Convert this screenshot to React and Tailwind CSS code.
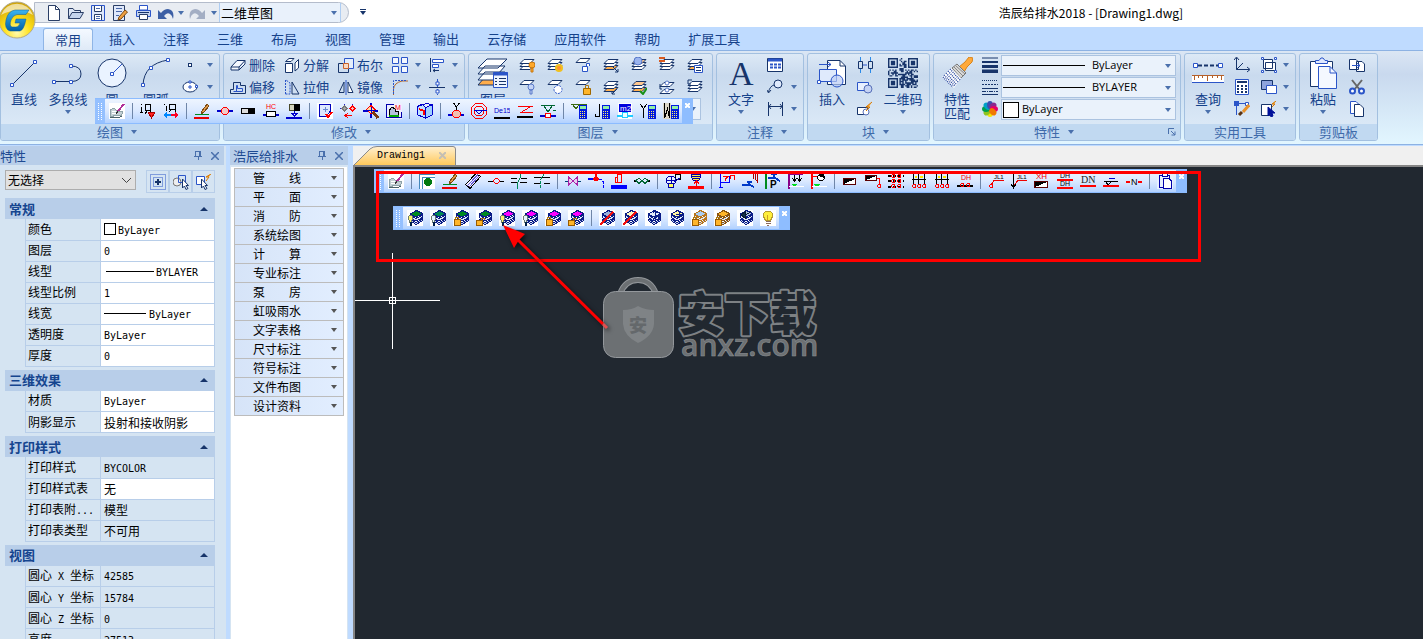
import React from "react";
import clsx from "clsx";

const NAVY = "#17346a";
const BLUE = "#2b55c8";
const ORANGE = "#e8912a";

// every shape is [path, stroke, fill, strokeWidth, dash]; text is { t, x, y, size, fill }
const calc = [
  ["M8 2H16V16H8z", null, "#0018e0"],
  ["M9 3H15V6H9z", null, "#8ff0a8"],
  ["M9 8.5H15M9 10.5H15M9 12.5H15M9 14.5H15", "#fff36a", null, 1, "1 1"],
];
const pencil = [
  ["M8 8L13 1L15 3L10 9L7 11z", "#7b4a12", "#e0994a"],
  ["M1 11.5H15", "#008a20"],
  ["M0 14.5H15", "#e80000", null, 2],
];
const notebook = [
  ["M0 0H16V16H0z", null, "#fff"],
  ["M1 7L5 5L8 8L14 9L12 13L7 12L2 14z", "#8fa3a8", "#c4d0d4"],
  ["M1 14.5H9L13 13.5", "#4a6268"],
  ["M3 8H7M3 10H8", "#fff"],
  ["M15 1L9 8", "#b0309a", null, 2],
  ["M9 8L7 11", "#333"],
];
const halfBox = [
  ["M1.5 5.5H13.5V11.5H1.5z", "#5c0000", "#fff"],
  ["M2 6H13L2 11z", null, "#000"],
];
const ring = (x, y) => [`M${x} ${y + 1}V${y + 3}M${x + 3} ${y + 1}V${y + 3}M${x + 0} ${y + 0.5}H${x + 3}M${x} ${y + 3.5}H${x + 3}`, "#f00", "#fff"];
const hydrants = [
  ["M1 6.5H15M2.5 1V12M7.5 1V12M13.5 1V12", "#000"],
  ["M4 4H6M9 4H12", "#ffe600", null, 2],
  ring(1.5, 11),
  ring(6.5, 11),
  ring(11.5, 11),
];

const toolShapes = {
  notebook,
  pencil,
  riserValve: [
    ["M1.5 1V2M1.5 4V9M0 9.5H3M5.5 1.5H10.5V7.5H5.5zM7.5 7.5L5 11M10.5 7V11", "#000"],
    ["M8 9H15L11.5 15z", "#a00", "#f22"],
  ],
  riserSpan: [
    ["M1.5 1V2M3.5 3V8M6.5 1.5H12.5V6.5H6.5zM8.5 6.5L6 9M12.5 6V9", "#000"],
    ["M0 12L4 9V11H8V13H4V15z", null, "#08f"],
    ["M16 12L12 9V11H8V13H12V15z", null, "#f02"],
  ],
  inlineNode: [
    ["M0 8H5M11 8H16", "#00c", null, 2],
    ["M4.5 6.5L6.5 4.5H9.5L11.5 6.5V9.5L9.5 11.5H6.5L4.5 9.5z", "#f00", "#f3c9c9"],
  ],
  blackBox: [
    ["M1.5 5.5H14.5V10.5H1.5z", "#000", "#dcdcdc"],
    ["M8 5H15V11H8z", null, "#000"],
  ],
  hc: [
    { t: "HC", x: 3, y: 6, size: 7, fill: "#f00" },
    ["M3.5 8.5H12.5V13.5H3.5z", "#000", "#fff"],
    ["M0 11.5H3M13 11.5H16", "#00c", null, 2],
  ],
  boxDrop: [
    ["M3.5 1.5H13.5V7.5H3.5z", "#4a4a2a", "#d5d5c0"],
    ["M8 1H14V8H8z", null, "#000"],
    ["M8.5 8V11", "#00c"],
    ["M0 14.5H16", "#00c", null, 2],
    ["M6 10.5H11L8.5 13z", "#00c", "#fff"],
  ],
  docCheck: [
    ["M0 0H16V16H0z", null, "#fff"],
    ["M2 1.5H13.5V8L9 13.5H2.5V1.5", "#00b", "#dce8ff"],
    ["M8 4V9M5.5 6.5H10.5", "#6a8ad0"],
    ["M9 11L11 14L15 9", "#f00", null, 2],
  ],
  nodeSplit: [
    ["M0 5.5H16M4.5 1V9M12.5 1V9", "#22c", null, 1, "2 1"],
    ["M2 5.5L4.5 3L7 5.5L4.5 8z", "#777", "#aaa"],
    ["M10 5.5L12.5 3L15 5.5L12.5 8z", "#f00", "#fbb"],
    ["M12 12.5H5M8 10L5 12.5L8 15", "#f00"],
  ],
  crossTarget: [
    ["M8 0V15M0 8H15", "#00c", null, 2],
    ["M3.5 6.5L8 2.5L12 6.5L8 11z", "#f00", "#ffd9a0"],
    ["M8 4V10M4 7H12", "#00c"],
    ["M10 9L15 15", "#7a3a10", null, 3],
  ],
  mBlock: [
    ["M0 0H16V16H0z", null, "#eef"],
    ["M8 1.5H.5V14.5H15.5V9", "#00a"],
    ["M3 12V8L6 4L9 6V8H12V12z", "#000", "#b4c2dc"],
    ["M3 13L13 13", "#0a0", null, 2],
    { t: "M", x: 9, y: 7, size: 7, fill: "#f00" },
  ],
  solidBox: [
    ["M0.5 3.5L5 1L8.5 4.5V15L1 12z", "#00c", "#bfe0ff"],
    ["M8.5 4.5L15 2V12L8.5 15z", "#00c", "#9fd0ff"],
    ["M0.5 3.5L10 0.5L15 2", "#00c"],
    ["M2 6L7 8V12", "#f00", null, 2],
  ],
  yValve: [
    ["M5.5 0L8.5 4L11.5 0M8.5 4V7", "#000"],
    ["M0 12H16", "#00c", null, 2],
    ["M4.5 9.5L6.5 7.5H10.5L12.5 9.5V12.5L10.5 14.5H6.5L4.5 12.5z", "#f00", "#f3c0b0"],
  ],
  octagon: [
    ["M4.5 .5H11.5L15.5 4.5V11.5L11.5 15.5H4.5L.5 11.5V4.5z", "#f00"],
    ["M5.5 3.5H10.5L12.5 5.5V10.5L10.5 12.5H5.5L3.5 10.5V5.5z", "#f00"],
    ["M3 7.5H16M5 8L8 11L11 8", "#00c"],
  ],
  de15: [
    { t: "De15", x: 0, y: 10, size: 7, fill: "#00c" },
    ["M0 14.5H16", "#000", null, 2],
  ],
  slope: [
    ["M1 3.5H16M3 9.5H16M3 10L13 4", "#f00"],
    ["M0 14H16", "#000", null, 2],
  ],
  greenValve: [
    ["M1 2.5H15M4 3L8 9L12 3M13 7H16", "#063"],
    ["M0 12.5H16", "#00c", null, 2],
    ["M5.5 10.5H10.5V14.5H5.5z", "#f00", "#fff"],
  ],
  calcTri: [["M0 1.5H16M2 2L5 6L8 2", "#3a6a10"], ...calc],
  calcJ: [["M5.5 1V13.5H1.5V11", "#000"], ...calc],
  calcM2: [
    ["M1 0H15V16H1z", null, "#fff"],
    ["M2 1H13L14 2V9H2z", null, "#00d"],
    { t: "m2", x: 3, y: 8, size: 8, fill: "#fff" },
    ["M0 12.5H16", "#2cf", null, 2],
    ["M5 12a3 3 0 1 0 6 0a3 3 0 1 0-6 0", "#2cf", "#eff"],
  ],
  calcY: [["M0.5 1L3.5 6L6.5 1M3.5 6V15", "#000"], ...calc],
  calcW: [["M0 0H8V16H0z", null, "#ddd8c8"], ["M1.5 0V15L4.5 6L6.5 15V0", "#000"], ...calc],

  pipeDot: [
    ["M0 0H16V16H0z", null, "#fff"],
    ["M0.5 16V1.5H16M3.5 16V4.5H16", "#48b"],
    ["M5 9a4 4 0 1 0 8 0a4 4 0 1 0-8 0", null, "#007a10"],
  ],
  pipes: [
    ["M0.5 11.5L11 .5L15.5 3.5L5 15.5z", "#000", "#f4f2ff"],
    ["M2 13L13 1.5M4 14L14 3", "#6a60d8"],
  ],
  redNode: [["M0 8H5M11 8H16", "#000"], ["M5.5 7.5L7.5 5.5H9.5L11.5 7.5V8.5L9.5 10.5H7.5L5.5 8.5z", "#f00"]],
  cross1: [["M0 5.5H6M10 5.5H16M0 9.5H6M9 9.5H16", "#000"], ["M9.5 0V4L6.5 10V16", "#085"]],
  cross2: [["M0 4.5H16M0 10.5H6M10 10.5H16", "#000"], ["M10 1L6 8V15", "#085", null, 1, "3 1"]],
  bowtie: [["M0 8H3M13 8H16", "#047"], ["M3.5 4V12L12.5 4V12z", "#a2a", "#e6d0f2"]],
  redTee: [
    ["M0 6H10", "#00f", null, 2],
    ["M10 6.5H13L15.5 9V15", "#00f", null, 1, "4 1"],
    ["M8 0V6", "#f00", null, 2],
    ["M6 4H10V5H11V7H10V8H6V7H5V5H6z", null, "#f00"],
  ],
  steps: [["M4 9.5H6.5V1.5H10.5V9.5H7M4.5 9V4.5H7", "#f00"], ["M0 14H16", "#00f", null, 4]],
  greenChain: [["M0 7.5H3M13 7.5H16", "#000", null, 2], ["M2 7.5L5 5L11 10.5L14 7.5L11 5L5 10.5z", "#063"]],
  pump: [
    ["M10.5 1.5H15.5V6.5H10.5z", "#000"],
    ["M1.5 5.5L3.5 3.5H8.5L10.5 5.5V9.5L8.5 11.5H3.5L1.5 9.5z", "#00a", "#e8f0ff"],
    ["M1 7.5H11M6 3V11M9 9L15 5", "#00a"],
    ["M3.5 10.5H8.5V14.5H3.5z", "#00a", "#ffff60"],
  ],
  yellowPump: [
    ["M3.5 1.5H12.5V4.5L10.5 7.5H5.5L3.5 4.5z", "#00a", "#ffe94a"],
    ["M3 3.5H13M5 5.5H11", "#00a"],
    ["M8.5 8V13M6 10.5L8.5 8L11 10.5", "#f00"],
    ["M0 14.5H16", "#f00", null, 3],
  ],
  funnel: [
    ["M1.5 1V15M1 9.5H10.5V3M0 14.5H4", "#00f"],
    ["M4 3.5H9L6.5 6V8M11.5 6V2.5H15.5V7", "#f00"],
  ],
  tap: [
    ["M0 12H8L12 14M5 9H10M7 8V12", "#0039c8", null, 2],
    ["M11.5 0V6M13.5 0V6L15.5 9V0", "#a00"],
  ],
  pTap: [
    ["M1 0V16", "#008a20", null, 2],
    ["M3 5H10L15 8M6 1H12M9 1V5", "#0039c8", null, 2],
    { t: "P", x: 5, y: 15, size: 10, fill: "#000", b: true },
  ],
  sprinkler: [
    ["M1 0V16M0 1H15", "#808", null, 2],
    ["M6.5 2V8M11.5 2V8M4 5L6.5 8L9 5M9 5L11.5 8L14 5", "#000"],
    ["M3 11H9L6 14z", null, "#0d2"],
    ["M1 13.5H16", "#fff"],
  ],
  redBar: [
    ["M1 0V16", "#f00", null, 2],
    ["M1 3H6", "#f00"],
    ["M6.5 3.5L8.5 1.5H11.5L13.5 3.5V5.5L11.5 7.5H8.5L6.5 5.5z", "#000", "#fff"],
    ["M7 3L9 1H13V5z", null, "#000"],
    ["M2 11H9L6 14z", null, "#0d2"],
    ["M1 13.5H16", "#fff"],
  ],
  halfBox,
  halfBoxRed: [
    ["M0.5 2.5H11.5V7.5H0.5z", "#5c0000", "#fff"],
    ["M1 3H11L1 7z", null, "#000"],
    ["M12 5.5H14.5V11", "#f00"],
    ring(12.5, 11),
  ],
  ladder: [
    ["M0 2.5H16M0 8H16M0 13.5H16", "#000", null, 2, "3 2"],
    ring(3.5, 1),
    ring(9.5, 1),
    ring(3.5, 6),
    ring(9.5, 6),
    ring(3.5, 11),
    ring(9.5, 11),
  ],
  hydrants,
  dhNode: [
    { t: "DH", x: 4, y: 7, size: 7, fill: "#e00" },
    ["M0 12.5H16", "#000", null, 2],
    ring(3.5, 10),
    ring(9.5, 10),
  ],
  jl1: [
    { t: "JL1", x: 6, y: 6, size: 6, fill: "#000" },
    ["M6 7.5H16M6 7.5L3 12", "#e00"],
    ring(1.5, 11),
  ],
  jl1Down: [
    { t: "JL1", x: 6, y: 6, size: 6, fill: "#000" },
    ["M7 7.5H16M7 7.5L3 12", "#e00"],
    ["M2.5 0V14M0 11L2.5 15L5 11", "#000"],
  ],
  xh: [
    { t: "XH", x: 2, y: 6, size: 8, fill: "#e00" },
    ["M0.5 8.5H13.5V14.5H0.5z", "#5c0000", "#fff"],
    ["M1 9H13L1 14z", null, "#000"],
  ],
  dhdh: [
    { t: "DH", x: 3, y: 5, size: 7, fill: "#000" },
    ["M0 7H16M0 15H16", "#f00", null, 2],
    { t: "DH", x: 3, y: 13, size: 7, fill: "#000" },
  ],
  dn: [{ t: "DN", x: 1, y: 10, size: 10, fill: "#222", serif: true }, ["M0 13H16", "#f00", null, 2]],
  level: [
    ["M1 8.5H15M3 9L5 12L8 9", "#000"],
    ["M6 5.5H12", "#00c"],
    ["M0 13H16", "#f00", null, 2],
  ],
  nLine: [{ t: "N", x: 5, y: 12, size: 9, fill: "#000" }, ["M0 8.5H4M12 8.5H16", "#f00", null, 2]],
  clipboard: [
    ["M0 0H16V16H0z", null, "#e6f0ff"],
    ["M2.5 2.5H12.5V14.5H2.5z", "#00a"],
    ["M5 0.5H10V3.5H5z", "#00a", "#fff"],
    ["M6.5 5.5H12L14.5 8V15.5H6.5z", "#00a", "#fff"],
  ],
  bulb: [
    ["M0 0H16V16H0z", null, "#fff"],
    ["M5.5 10.5L3.5 6.5V3.5L5.5 1.5H10.5L12.5 3.5V6.5L10.5 10.5z", "#b59a30", "#ffee3a"],
    ["M7.5 5V10", "#d0a020"],
    ["M6 11.5H11M6 13.5H11M7 15.5H9", "#8a6a5a"],
  ],
};

const stack = (top, edge = "#0a1c86") => [
  ["M0 0H16V16H0z", null, "#fff"],
  ["M3 10.5L9 14.5L15.5 10.5V9L9 12.500L3 9z", edge, "#c9d6ee"],
  ["M3 7.5L9 11L15.5 7.5V5L9 8.5L3 5z", edge, "#dfe8f6"],
  ["M3 4L9.5 .5L15.5 3.5L9.500 7z", edge, top],
];
const bulbMark = (fill) => [
  ["M1.5 6.5L2.5 5.5H4.5L5.5 6.5V9.5L4.5 10.5V12H2.5V10.5L1.5 9.5z", "#6c7c70", fill],
  ["M4 12V16", "#00204a", null, 2],
];
const lockMark = [
  ["M2.5 10V7.5H5.5V10", "#b07a10"],
  ["M1.5 9.5H7.5V15.5H1.5z", "#9a5c00", "#ffb52a"],
];
const unlockMark = [
  ["M5.5 11V8.5H8.5V10", "#b07a10"],
  ["M0.5 10.5H6.5V15.5H0.5z", "#9a5c00", "#ffb52a"],
];
const slash = [["M1 15L14 2", "#f01010", null, 2]];
const star = [["M5 6H15M10 1V11M8 3L10 1L12 3M13 4L15 6L13 8M8 9L10 11L12 9", "#0a1c86"]];

Object.assign(toolShapes, {
  layerOn: [...stack("#008a20"), ...bulbMark("#fff36a")],
  layerOff: [...stack("#008a50"), ...bulbMark("#e4f4ff")],
  layerLock: [...stack("#008a20"), ...lockMark],
  layerUnlock: [...stack("#008a20"), ...unlockMark],
  entOn: [...stack("#ff00ff"), ...bulbMark("#fff36a")],
  entOff: [...stack("#ff00ff"), ...bulbMark("#e4f4ff")],
  entLock: [...stack("#ff00ff"), ...lockMark],
  entUnlock: [...stack("#ff00ff"), ...unlockMark],
  layerDelete: [...stack("#9ab0da"), ...slash],
  entDelete: [...stack("#fff6c0"), ...slash],
  layerMove: [...stack("#e4ecfa"), ...star],
  entMove: [...stack("#fff6a0"), ["M8 4.500H15M11.500 1V8", "#0a1c86"]],
  layerLockAll: [...stack("#a9cdf2", "#b8741a"), ...lockMark],
  layerLockOther: [...stack("#ffb52a", "#8a5410"), ...lockMark],
  layerBack: [...stack("#a9bddc"), ["M4 5L8 8L8 2zM8 5Q12 4 14 1", "#0a1c30", "#16324a"]],
});

// ribbon icons
const sheet = (y, fill = "#fff") => [`M5 ${y}H15L11 ${y + 4}H1z`, NAVY, fill];
const sheets3 = (bottom = "#fff", top = "#fff") => [sheet(8.5, bottom), sheet(5.5), sheet(2.5, top)];
const ribbonShapes = {
  newFile: [["M2.5 .5H9.5L13.5 4.5V15.5H2.5z", "#2a3e66", "#fff"], ["M9.5 .5V4.5H13.5", "#2a3e66"]],
  open: [["M.5 13.5V3.5H5L6.5 5.5H12.5V7.5", "#2a3e66", "#dde6f5"], ["M.5 13.5L4 7.5H15.5L12 13.5z", "#2a3e66", "#c5d4ec"]],
  save: [["M1.5 .5H14.5V15.5H1.5z", BLUE, "#dfe8fa"], ["M4.5 1V6.5H11.5V1M4.5 15V9.5H11.5V15", "#2a3e66", "#fff"], ["M6 11.5H10M6 13.5H10M6 3.5H10", "#4a68a8"]],
  saveAs: [["M1.5 .5H12.5V15.5H1.5z", "#2a3e66", "#dfe8fa"], ["M4 3.5H10M4 6.5H10M4 10.5H7", "#4a68a8"], ["M7 12L13 5L15.5 7L9 14L6 15z", "#7b4a12", "#f0a040"]],
  print: [["M4.5 .5H12.5V5H4.5z", BLUE, "#fff"], ["M1.5 5.5H15.5V11.5H1.5z", BLUE, "#c5d4f0"], ["M4.5 9.5H12.5V14.5H4.5z", "#2a3e66", "#fff"], ["M3 7.5H14", NAVY]],
  undo: [["M0 5V14H9L6 11Q9 7 12 9Q14 10 15 14Q17 5 10 4Q6 4 3 8z", null, "#3c5fa5"]],
  redo: [["M16 5V14H7L10 11Q7 7 4 9Q2 10 1 14Q-1 5 6 4Q10 4 13 8z", null, "#a3aec4"]],
  erase: [["M1 10L7 3.5H15L9 10zM1 10V13H9V10M9 13L15 7V3.5", NAVY, "#f4f8ff"]],
  explode: [["M1.5 6.5H8.5V15.5H1.5z", NAVY, "#fff"], ["M1.5 4.5L5 1.5H10L7 4.5zM11 6L14.5 2.5V11L11 14z", NAVY, "#fff"]],
  boolean: [["M6.5 1.5H15.5V11.5H6.5z", BLUE, "#e4eefb"], ["M5.5 6.5H.5V15.5H10.5V12", NAVY], ["M5.5 6.5H10.5V11.5H5.5z", "#c8622a", "#fbd9c0"]],
  offset: [["M.5 14.5V10.5H3.5V3.5H10.5V6.5H15.5V14.5z", NAVY], ["M3.5 12.5H12.5V9.5H7.5V6.5H6.5V12", BLUE]],
  stretch: [["M1.5 1V15M1.5 15H6V4L2 1", BLUE, null, 1, "2 1"], ["M8 3L15 15H8z", NAVY]],
  mirror: [["M6 3V13.5H1z", NAVY], ["M10 3V13.5H15z", NAVY, "#fff"], ["M8 1V16", BLUE]],
  array: [["M.5 .5H6.5V6.5H.5zM9.5 9.5H15.5V15.5H9.5zM9.5 .5H15.5V6.5H9.5zM.5 9.5H6.5V15.5H.5z", BLUE, "#f4f8ff"]],
  align: [["M1.5 1V15", NAVY], ["M3.5 2.5H14.5V5.5H3.5zM3.5 7.5H9.5V10.5H3.5z", BLUE, "#fff"], ["M4 13.5H10M4 13.5L6 12M4 13.5L6 15", NAVY]],
  fillet: [["M1.5 16V10Q2 4 10 2H16", "#b56a30"], ["M1.5 15V1.5H15", BLUE, null, 1, "2 1"]],
  breakLine: [["M0 8.5H16", NAVY], ["M8.5 0V16", BLUE, null, 1, "3 2"], ["M7 3h3v3h-3zM7 11h3v3h-3z", BLUE, "#fff"]],
  lyOn: [...sheets3(), ["M10 8a3 3 0 1 0 6 0a3 3 0 1 0-6 0M12 11h2v4h-2z", "#c87810", "#ffa82a"]],
  lySun: [...sheets3(), ["M9 11a3 3 0 1 0 6 0a3 3 0 1 0-6 0", "#f0c020", "#ff9030", 2]],
  lyUnlock: [sheet(1.5), ["M7.5 9.5H12.5V14.5H7.5zM11.5 9V6.5H14.5V9", BLUE, "#fff"]],
  lyMatch: [...sheets3("#ffb050"), ["M10 10L15 15M15 12V15H12", NAVY]],
  lyGlobe: [...sheets3("#fff", "#ffc890"), ["M3 4a4 4 0 1 0 8 0a4 4 0 1 0-8 0", "#5878c8", "#9ab4ee"]],
  lyRed: [...sheets3(), ["M0 1H6M0 4H6", "#d85a20", null, 2]],
  lyList: [...sheets3("#ffb050"), ["M7.5 8.5H15.5V15.5H7.5z", BLUE, "#fff"], ["M9 10.5H14M9 13.5H14", NAVY]],
  lyOff: [sheet(1.5), ["M9 8a3 3 0 1 0 6 0a3 3 0 1 0-6 0M11 11h2v4h-2z", "#5878c8", "#c4d4f6"]],
  lyFreeze: [sheet(1.5), ["M7 10.5a4 4 0 1 0 8 0a4 4 0 1 0-8 0", BLUE, "#fff", 1, "2 1"]],
  lyLock: [sheet(1.5), ["M10.5 9V6.5H13.5V9", "#b07a10"], ["M8.5 9.5H15.5V15.5H8.5z", "#a06800", "#ffb52a"]],
  lyDown: [...sheets3("#ffb050"), ["M14 10L9 15M9 12V15H12", NAVY]],
  lyCheck: [...sheets3("#ffb050", "#ffc890"), ["M9 12L12 15L16 9", "#189018", null, 2]],
  lyWalk: [sheet(10.5), sheet(3.5), ["M6 4a2 2 0 1 0 4 0a2 2 0 1 0-4 0M6 11a2 2 0 1 0 4 0a2 2 0 1 0-4 0", "#5878c8", "#fff"], ["M1 5V10H3", NAVY]],
  lyPrev: [...sheets3(), ["M1 1V5H4M1 1H5", NAVY]],
  table: [["M.5 1.5H15.5V14.5H.5z", NAVY, "#fff"], ["M1 3H15", BLUE, null, 3], ["M3 7.5H6M7 7.5H10M11 7.5H14M3 10.5H6M7 10.5H10M11 10.5H14", BLUE, null, 2]],
  leader: [["M7 5a4 4 0 1 0 8 0a4 4 0 1 0-8 0", NAVY, "#dfeafc"], ["M7 6Q3 7 1.5 13M0 11L1.5 14L4 11", NAVY]],
  dim: [["M1.5 1V15M15.5 1V15M2 5.5H15M4 3L2 5.5L4 8M13 3L15 5.5L13 8", NAVY]],
  blockLink: [["M1.5 4.5H5.5V11.5H1.5zM11.5 4.5H15.5V11.5H11.5z", NAVY], ["M3.5 0V4M3.5 12V16M13.5 0V4M13.5 12V16", "#2a8ae8"], ["M6 8H10", BLUE]],
  blockMake: [["M.5 3.5H11.5V11.5H.5z", BLUE, "#e8f0ff"], ["M7 10a4 4 0 1 0 8 0a4 4 0 1 0-8 0", "#5870b8", "#c4d2f4"]],
  blockEdit: [["M.5 6.5H10.5V13.5H.5z", NAVY, "#fff"], ["M6 11a3 3 0 1 0 6 0a3 3 0 1 0-6 0", "#5870b8", "#fff"], ["M15 1L9 6H13L9 10", "#d87800", "#ffa82a"]],
  weight: [["M0 1H16", NAVY], ["M0 5H16", NAVY, null, 2], ["M0 9.5H16", NAVY, null, 3], ["M0 14.5H16", NAVY, null, 4]],
  ltype: [["M0 1.5H16", NAVY, null, 1, "1 1"], ["M0 5.5H16", NAVY, null, 1, "2 1"], ["M0 9.5H16M0 15.5H16", NAVY], ["M0 12.5H16", NAVY, null, 1, "4 1 1 1"]],
  ucs: [["M2.5 1V12.5H15M2.5 12.5L9 6M0 3L2.5 0L5 3M13 10L16 12.5L13 15", NAVY]],
  calculator: [["M1.5 .5H14.5V15.5H1.5z", BLUE, "#fff"], ["M3 3H13", NAVY, null, 2], ["M3 7H13M3 10H13M3 13H13", NAVY, null, 2, "2 2"]],
  paintLine: [["M2.5 14V2.5H13", BLUE], ["M0 0H5V5H0z", null, BLUE], ["M11.5 1.5H14.5V4.5H11.5z", BLUE, "#fff"], ["M15 4L9 11", ORANGE, null, 3], ["M8 11L5 14", "#5a3210", null, 3]],
  group: [["M2.5 2.5H11.5V11.5H2.5zM4.5 5.5H14.5V13.5H4.5z", NAVY, "#fff"], ["M.5 .5H2.5V2.5H.5zM13.5 .5H15.5V2.5H13.5zM.5 13.5H2.5V15.5H.5zM13.5 13.5H15.5V15.5H13.5z", BLUE, "#fff"]],
  overlap: [["M.5 1.5H11.5V10.5H.5z", NAVY, "#8ea4dc"], ["M5.5 6.5H15.5V14.5H5.5z", BLUE, "#fff"]],
  quickSel: [["M.5 3.5H10.5V14.5H.5z", NAVY, "#fff"], ["M7 6L14 12H11L12 15L10 16L9 13L7 15z", "#00109a", "#00109a"], ["M15 0L11 3H14L11 6", "#d87800", "#ffa82a"]],
  copyLink: [["M.5 2.5H7L9.5 5V12.5H.5zM7.5 4.5H13L15.5 7V14.5H7.5z", NAVY, "#fff"], ["M3 8.5H11M8 6L11 8.5L8 11", BLUE]],
  cut: [["M3 1L11 11M13 1L5 11", "#666", null, 2], ["M1 12a2 2 0 1 0 5 0a2 2 0 1 0-5 0M10 12a2 2 0 1 0 5 0a2 2 0 1 0-5 0", BLUE, "#fff", 2]],
  copy: [["M1.5 .5H7L10.5 4V12.5H1.5z", BLUE, "#fff"], ["M5.5 3.5H11L14.5 7V15.5H5.5z", NAVY, "#fff"]],
  pickAdd: [["M.5 .5H15.5V15.5H.5zM3.5 3.5H12.5V12.5H3.5z", BLUE, null, 1, "1 1"], ["M8 5V11M5 8H11", NAVY, null, 2]],
  pickObj: [["M0 8a4 4 0 1 0 8 0a4 4 0 1 0-8 0", "#777", "#eee"], ["M5.5 1.5H12.5V8.5H5.5z", BLUE], ["M9.5 5V14L11.5 12L13 15.5L15 14.5L13 11.5H15.5z", NAVY, "#fff"]],
  pickFast: [["M.5 2.5H8.5V10.5H.5z", BLUE, "#fff"], ["M5.5 5V14L7.5 12L9 15.5L11 14.5L9 11.5H11.5z", NAVY, "#fff"], ["M15 0L10 3H13L10 7", "#d87800", "#ffa82a"]],
};

const Shapes = ({ list }) =>
  list.map((s, i) =>
    Array.isArray(s) ? (
      <path
        key={i}
        d={s[0]}
        stroke={s[1] || "none"}
        fill={s[2] || "none"}
        strokeWidth={s[3] || 1}
        strokeDasharray={s[4]}
      />
    ) : (
      <text
        key={i}
        x={s.x}
        y={s.y}
        fontSize={s.size}
        fill={s.fill}
        fontWeight={s.b ? 700 : 400}
        fontFamily={s.serif ? "Liberation Serif, serif" : "Liberation Sans, sans-serif"}
      >
        {s.t}
      </text>
    )
  );

const Icon = ({ list, crisp }) => (
  <svg
    viewBox="0 0 16 16"
    className="h-4 w-4 shrink-0"
    shapeRendering={crisp ? "crispEdges" : "auto"}
    aria-hidden="true"
  >
    <Shapes list={list} />
  </svg>
);

const Caret = ({ className }) => (
  <svg viewBox="0 0 6 4" className={clsx("h-1 w-1.5 shrink-0", className || "text-[#4a70ac]")} aria-hidden="true">
    <path d="M0 0H6L3 4z" fill="currentColor" />
  </svg>
);

const CaretButton = ({ label, className }) => (
  <button aria-label={label} className={clsx("flex items-center justify-center", className || "h-[22px] w-4")}>
    <Caret />
  </button>
);

const IconButton = ({ name, className }) => (
  <button aria-label={name} className={clsx("flex h-[22px] items-center justify-center", className || "w-6")}>
    <Icon list={ribbonShapes[name]} />
  </button>
);

const ToolStrip = ({ groups, className, label }) => (
  <div
    role="toolbar"
    aria-label={label}
    className={clsx("absolute flex border-y border-[#8cbcff] bg-[#94c0ff]", className)}
  >
    <div className="flex w-[10px] items-center justify-center">
      <svg viewBox="0 0 4 17" className="h-[17px] w-1" shapeRendering="crispEdges" aria-hidden="true">
        <path d="M.5 0V17M3.5 0V17" stroke="#fff" strokeDasharray="1 1" />
      </svg>
    </div>
    <div className="flex items-center bg-linear-to-b from-[#eef5ff] via-[#dbe9ff] to-[#b3d2ff]">
      {groups.map((group, g) => (
        <React.Fragment key={g}>
          {g > 0 && (
            <span className="flex w-2 justify-center">
              <span className="h-4 w-px bg-[#6f86a8]" />
            </span>
          )}
          {group.split(" ").map((name, i) => (
            <button key={name + i} aria-label={name} className="flex h-[22px] w-[23px] items-center justify-center">
              <Icon list={toolShapes[name]} crisp />
            </button>
          ))}
        </React.Fragment>
      ))}
    </div>
    <button aria-label="关闭" className="flex w-[11px] justify-center bg-[#8ebdff] pt-1">
      <svg viewBox="0 0 5 5" className="h-[5px] w-[5px]" aria-hidden="true">
        <path d="M0 0L5 5M5 0L0 5" stroke="#fff" strokeWidth="2" />
      </svg>
    </button>
  </div>
);

const drawTools = [
  "notebook",
  "riserValve riserSpan",
  "pencil inlineNode blackBox hc boxDrop",
  "docCheck nodeSplit crossTarget mBlock",
  "solidBox",
  "yValve octagon de15 slope greenValve",
  "calcTri calcJ calcM2 calcY calcW",
];
const pipeTools = [
  "notebook",
  "pipeDot pencil pipes redNode cross1 cross2",
  "bowtie redTee steps greenChain",
  "pump yellowPump",
  "funnel tap pTap sprinkler redBar",
  "halfBox halfBoxRed ladder hydrants hydrants dhNode",
  "jl1 jl1Down xh dhdh dn level nLine",
  "clipboard",
];
const layerTools = [
  "layerOn layerOff layerLock layerUnlock entOn entOff entLock entUnlock",
  "layerDelete entDelete layerMove entMove layerLockAll layerLockOther layerBack bulb",
];

const Panel = ({ title, caret, launcher, className, children }) => (
  <section
    className={clsx(
      "mr-[3px] flex h-[88px] shrink-0 flex-col rounded-[3px] border border-[#a3c0e0] bg-linear-to-b from-[#dde9f6] via-[#c9daee] via-25% to-[#e0edf9]",
      className
    )}
  >
    <div className="flex h-[70px]">{children}</div>
    <h2 className="flex h-4 items-center justify-center gap-2 rounded-b-[2px] bg-[#c1d9f1] text-[13px] leading-4 text-[#3e6aaa]">
      <span className={clsx(caret && "pl-[14px]", launcher && "ml-auto")}>{title}</span>
      {caret && <Caret />}
      {launcher && (
        <button aria-label="特性设置" className="mr-1 ml-auto">
          <svg viewBox="0 0 8 8" className="h-2 w-2">
            <path d="M.5 6V.5H6M3 3L7 7M7 3.5V7H3.5" stroke="#4a70ac" fill="none" />
          </svg>
        </button>
      )}
    </h2>
  </section>
);

const BigButton = ({ label, caret, className, children }) => (
  <button className={clsx("flex shrink-0 flex-col items-center text-[13px] leading-[14px] text-[#15428b]", className || "w-11")}>
    <span className="flex h-[38px] w-full items-center justify-center">{children}</span>
    <span>{label}</span>
    {caret && <Caret className="mt-1 text-[#4a70ac]" />}
  </button>
);

const node = { fill: "#fff", stroke: BLUE, strokeWidth: 1 };
const LineIcon = () => (
  <svg viewBox="0 0 32 32" className="h-8 w-8" fill="none">
    <path d="M4 28L27 5" stroke={NAVY} />
    <path d="M2.5 26.5h3v3h-3zM25.5 3.5h3v3h-3z" {...node} />
  </svg>
);
const PolylineIcon = () => (
  <svg viewBox="0 0 32 32" className="h-8 w-8" fill="none">
    <path d="M2 24.5H20Q29 24 29 17Q29 9 19 9" stroke={NAVY} />
    <path d="M.5 23.5h3v3h-3zM17.5 23.5h3v3h-3zM17.5 7.5h3v3h-3z" {...node} />
  </svg>
);
const CircleIcon = () => (
  <svg viewBox="0 0 32 32" className="h-8 w-8" fill="none">
    <circle cx="16" cy="16" r="14" stroke={NAVY} fill="#eaf3ff" />
    <path d="M16 17L26 7" stroke={BLUE} />
    <path d="M14.5 15.5h3v3h-3z" {...node} />
  </svg>
);
const ArcIcon = () => (
  <svg viewBox="0 0 32 32" className="h-8 w-8" fill="none">
    <path d="M3 28Q4 7 28 3" stroke={NAVY} />
    <path d="M1.5 26.5h3v3h-3zM9.5 9.5h3v3h-3zM26.5 1.5h3v3h-3z" {...node} />
  </svg>
);
const LayersIcon = () => (
  <svg viewBox="0 0 32 32" className="h-8 w-8" fill="none">
    <path d="M8 20H28L21 28H1z" stroke={NAVY} fill="#ffad4a" />
    <path d="M8 15H28L21 23H1zM8 9H28L21 17H1zM10 2H30L21 11H1z" stroke={NAVY} fill="#fff" />
    <path d="M16.5 15.5H30.5V30.5H16.5z" stroke={BLUE} fill="#eef4ff" />
    <path d="M16 17H31" stroke={BLUE} strokeWidth="3" />
    <path d="M18 21.5H20M22 21.5H29M18 24.5H20M22 24.5H29M18 27.5H20M22 27.5H29" stroke={NAVY} />
  </svg>
);
const InsertIcon = () => (
  <svg viewBox="0 0 32 32" className="h-8 w-8" fill="none">
    <path d="M11.5 3.5H24L29.5 9V27.5H11.5z" stroke={NAVY} fill="#fff" />
    <path d="M24 3.5V9H29" stroke={NAVY} />
    <path d="M3.5 12.5H20.5V24.5H3.5z" stroke={BLUE} fill="#dfeafc" />
    <path d="M3 7.5H15M12 5L15 7.5L12 10" stroke={BLUE} />
    <circle cx="21" cy="24" r="6" stroke={BLUE} fill="#b9ccf4" fillOpacity=".7" />
    <path d="M1.5 23.5h3v3h-3z" {...node} />
  </svg>
);
const TextIcon = () => (
  <svg viewBox="0 0 32 32" className="h-8 w-8">
    <text x="4" y="28" fontSize="34" fontFamily="Liberation Serif, serif" fill={NAVY}>A</text>
  </svg>
);
const BrushIcon = () => (
  <svg viewBox="0 0 32 32" className="h-8 w-8" fill="none">
    <path d="M18 10L24 5L28 0L32 1L31 5L26 10L23 15z" fill="#ffa93a" stroke="#d8841a" />
    <path d="M11 11L16 7L25 16L20 21z" fill="#d8d8d8" stroke="#777" />
    <path d="M13 10L22 19M15 9L24 17" stroke="#888" />
    <path d="M10 11L20 21L13 31L1 20z" fill="#fff" />
    <path d="M9 12L19 23M7 14L17 25M5 16L15 27M3 18L14 29M2 20L12 30" stroke="#2848a0" strokeWidth="1.5" strokeDasharray="1 1" />
  </svg>
);
const MeasureIcon = () => (
  <svg viewBox="0 0 32 32" className="h-8 w-8" fill="none">
    <path d="M6 8.5H26" stroke={NAVY} strokeWidth="2" strokeDasharray="4 2" />
    <path d="M1.5 6.5h4v4h-4zM26.5 6.5h4v4h-4z" {...node} />
    <path d="M0 18.5H32V25H0z" fill="#fff" />
    <path d="M0 18.5H32M2.5 19V23M6.5 19V21M10.5 19V21M15.5 19V24M20.5 19V21M25.5 19V21M29.5 19V23" stroke="#b5602a" />
    <path d="M0 25.5H32" stroke={BLUE} />
  </svg>
);
const PasteIcon = () => (
  <svg viewBox="0 0 32 32" className="h-8 w-8" fill="none">
    <path d="M3.5 4.5H25.5V29.5H3.5z" stroke={NAVY} fill="#fff" />
    <path d="M8.5 6.5V3.5H12L14 1H16L18 3.5H20.5V6.5z" stroke={BLUE} fill="#dfe8ff" />
    <path d="M11.5 9.5H23L29.5 16V31.5H11.5z" stroke={BLUE} fill="#f4f8ff" />
    <path d="M23 9.5V16H29.5" stroke={BLUE} />
  </svg>
);

const QR_SIZE = 21;
const isFinder = (x, y) =>
  [[0, 0], [14, 0], [0, 14]].find(([fx, fy]) => x >= fx && x < fx + 7 && y >= fy && y < fy + 7);
const qrCells = [];
for (let y = 0; y < QR_SIZE; y++) {
  for (let x = 0; x < QR_SIZE; x++) {
    const f = isFinder(x, y);
    if (f) {
      const d = Math.max(Math.abs(x - f[0] - 3), Math.abs(y - f[1] - 3));
      if (d !== 2) qrCells.push([x, y]);
    } else if ((x * 7 + y * 13 + x * y * 3 + ((x * x + y) % 5)) % 9 < 5) {
      const quiet = (x === 7 && (y < 8 || y > 12)) || (y === 7 && (x < 8 || x > 12)) || (x === 13 && y < 8) || (y === 13 && x < 8);
      if (!quiet) qrCells.push([x, y]);
    }
  }
}
const QrIcon = () => (
  <svg viewBox="0 0 21 21" className="h-[30px] w-[30px]">
    <path d={qrCells.map(([x, y]) => `M${x} ${y}h1v1h-1z`).join("")} fill={NAVY} />
  </svg>
);

const wheel = ["#f5e400", "#8fc31f", "#009f4c", "#00a0c8", "#3a4fb0", "#8a2a90", "#e5006a", "#f07800"];
const WheelIcon = () => (
  <svg viewBox="0 0 16 16" className="h-4 w-4">
    {wheel.map((c, i) => (
      <ellipse key={c} cx="8" cy="4" rx="3" ry="4" fill={c} transform={`rotate(${180 + i * 45} 8 8)`} />
    ))}
  </svg>
);

const ModifyButton = ({ icon, label }) => (
  <button className="flex h-[22px] w-[54px] items-center gap-[3px] text-[13px] text-[#15428b]">
    <Icon list={ribbonShapes[icon]} />
    <span className="whitespace-nowrap">{label}</span>
  </button>
);

const LineSelect = ({ value, label, swatch }) => (
  <div className="flex h-[21px] items-center border border-[#abc3e0] bg-[#eaf2fb]">
    {swatch ? (
      <span className="ml-px h-4 w-4 shrink-0 border border-black bg-white" />
    ) : (
      <span className="mr-1 ml-px h-px w-[82px] shrink-0 bg-black" />
    )}
    <select aria-label={label} className="min-w-0 flex-1 appearance-none pl-[3px] font-['Open_Sans',sans-serif] text-[11px] text-black">
      <option>{value}</option>
    </select>
    <Caret className="mr-1 text-[#4a70ac]" />
  </div>
);

const Logo = () => (
  <svg viewBox="0 0 38 40" className="absolute top-0 left-0 z-10 h-10 w-[38px]">
    <defs>
      <radialGradient id="gold" cx="50%" cy="85%" r="90%">
        <stop offset="0" stopColor="#fffbb0" />
        <stop offset=".4" stopColor="#ffe11a" />
        <stop offset="1" stopColor="#c99a00" />
      </radialGradient>
      <linearGradient id="g" x1="0" y1="0" x2="0" y2="1">
        <stop offset="0" stopColor="#3cb4f0" />
        <stop offset="1" stopColor="#0060a8" />
      </linearGradient>
    </defs>
    <circle cx="17" cy="20" r="18" fill="url(#gold)" stroke="#b0aa90" />
    <path d="M1 15A17 17 0 0 1 33 15Q17 6 1 15z" fill="#fff" opacity=".6" />
    <path
      d="M29 10H15Q8 11 6 20Q4 29 10 31H20Q24 30 26 19H16L15 23H20Q19 27 16 27H12Q9 26 11 20Q13 15 17 14.5H26z"
      fill="url(#g)"
      stroke="#0a5a98"
      strokeWidth=".5"
    />
  </svg>
);

const tabs = ["插入", "注释", "三维", "布局", "视图", "管理", "输出", "云存储", "应用软件", "帮助", "扩展工具"];

const QuickButton = ({ name, className }) => (
  <button aria-label={name} className={clsx("flex h-full items-center justify-center", className || "w-[22px]")}>
    <Icon list={ribbonShapes[name]} />
  </button>
);

const TitleBar = () => (
  <header className="flex h-[27px] shrink-0 bg-white pt-[2px] pl-[34px]">
    <div className="flex h-[21px] w-[315px] shrink-0 items-center rounded-r-[12px] border border-[#b4bccb] bg-[#e8ecf2] pl-2">
      <QuickButton name="newFile" />
      <QuickButton name="open" />
      <QuickButton name="save" />
      <QuickButton name="saveAs" />
      <QuickButton name="print" className="w-6" />
      <QuickButton name="undo" className="w-[22px]" />
      <CaretButton label="撤销列表" className="h-full w-2" />
      <QuickButton name="redo" className="w-6" />
      <CaretButton label="重做列表" className="h-full w-[10px]" />
      <div className="flex h-full w-[122px] items-center border-x border-[#aecdf2] bg-[#e9f1fb]">
        <select aria-label="工作空间" className="min-w-0 flex-1 appearance-none pl-px text-[13px] leading-[18px] text-black">
          <option>二维草图</option>
        </select>
        <Caret className="mr-[3px] text-[#4a70ac]" />
      </div>
    </div>
    <button aria-label="自定义快速访问" className="ml-[10px] flex h-[20px] w-2 flex-col items-center justify-center gap-px">
      <span className="h-px w-1.5 bg-[#17346a]" />
      <Caret className="text-[#17346a]" />
    </button>
    <h1 className="flex-1 pl-[392px] text-center text-[12px] leading-[22px] text-black">浩辰给排水2018 - [Drawing1.dwg]</h1>
  </header>
);

const Ribbon = () => (
  <div className="relative flex h-[95px] shrink-0 border-t border-b border-[#8db2e3] bg-linear-to-b from-[#dbe6f4] via-[#c9d9ee] via-25% to-[#e2f6ff] pt-[2px]">
    <Panel title="绘图" caret className="w-[220px]">
      <div className="flex pl-px">
        <BigButton label="直线"><LineIcon /></BigButton>
        <BigButton label="多段线" caret><PolylineIcon /></BigButton>
        <BigButton label="圆"><CircleIcon /></BigButton>
        <BigButton label="圆弧"><ArcIcon /></BigButton>
      </div>
      <div className="flex w-6 flex-col">
        <button aria-label="点" className="flex h-[22px] items-center justify-center">
          <span className="h-1 w-1 border border-[#17346a] bg-white" />
        </button>
        <button aria-label="椭圆" className="flex h-[22px] items-center justify-center">
          <svg viewBox="0 0 16 16" className="h-4 w-4" fill="none">
            <ellipse cx="8" cy="8" rx="7" ry="5" stroke={NAVY} fill="#fff" />
            <path d="M8 6V10M6 8H10" stroke={BLUE} />
            <path d="M13.5 6.5h2v2h-2zM7 2h2v2h-2z" stroke={BLUE} fill="#fff" />
          </svg>
        </button>
      </div>
      <div>
        <CaretButton label="点选项" />
        <CaretButton label="椭圆选项" />
      </div>
    </Panel>

    <Panel title="修改" caret className="w-[242px]">
      <div className="grid h-11 grid-cols-[54px_54px_54px_16px_20px_18px_18px] pl-[6px]">
        <ModifyButton icon="erase" label="删除" />
        <ModifyButton icon="explode" label="分解" />
        <ModifyButton icon="boolean" label="布尔" />
        <IconButton name="array" className="w-4" />
        <CaretButton label="阵列选项" className="h-[22px]" />
        <IconButton name="align" className="w-[18px]" />
        <CaretButton label="对齐选项" className="h-[22px]" />
        <ModifyButton icon="offset" label="偏移" />
        <ModifyButton icon="stretch" label="拉伸" />
        <ModifyButton icon="mirror" label="镜像" />
        <IconButton name="fillet" className="w-4" />
        <CaretButton label="圆角选项" className="h-[22px]" />
        <IconButton name="breakLine" className="w-[18px]" />
        <CaretButton label="打断选项" className="h-[22px]" />
      </div>
    </Panel>

    <Panel title="图层" caret className="w-[245px]">
      <BigButton label="图层" className="ml-[2px] w-11"><LayersIcon /></BigButton>
      <div>
        <div className="grid h-11 grid-cols-[repeat(7,28px)]">
          {"lyOn lySun lyUnlock lyMatch lyGlobe lyRed lyList lyOff lyFreeze lyLock lyDown lyCheck lyWalk lyPrev"
            .split(" ")
            .map((n) => (
              <IconButton key={n} name={n} className="w-6" />
            ))}
        </div>
        <div className="flex h-[22px] w-[186px] items-center border border-[#abc3e0] bg-[#eaf2fb]">
          <select aria-label="当前图层" className="min-w-0 flex-1 appearance-none pl-1 text-[12px]">
            <option></option>
          </select>
          <Caret className="mr-1 text-[#4a70ac]" />
        </div>
      </div>
    </Panel>

    <Panel title="注释" caret className="w-[88px]">
      <BigButton label="文字" caret className="ml-px w-[46px]"><TextIcon /></BigButton>
      <div>
        <IconButton name="table" className="w-[22px]" />
        <IconButton name="leader" className="w-[22px]" />
        <IconButton name="dim" className="w-[22px]" />
      </div>
      <div className="pt-[22px]">
        <CaretButton label="引线选项" />
        <CaretButton label="标注选项" />
      </div>
    </Panel>

    <Panel title="块" caret className="w-[123px]">
      <BigButton label="插入" className="ml-[2px] w-11"><InsertIcon /></BigButton>
      <div>
        <IconButton name="blockLink" className="w-[22px]" />
        <IconButton name="blockMake" className="w-[22px]" />
        <IconButton name="blockEdit" className="w-[22px]" />
      </div>
      <BigButton label="二维码" caret className="ml-[3px] w-[48px]"><QrIcon /></BigButton>
    </Panel>

    <Panel title="特性" caret launcher className="w-[248px]">
      <BigButton label={<>特性<br />匹配</>} className="ml-px w-11"><BrushIcon /></BigButton>
      <div>
        <IconButton name="weight" className="w-[22px]" />
        <IconButton name="ltype" className="w-[22px]" />
        <button aria-label="颜色" className="flex h-[22px] w-[22px] items-center justify-center"><WheelIcon /></button>
      </div>
      <div className="flex w-[175px] flex-col gap-px pt-px">
        <LineSelect value="ByLayer" label="线宽" />
        <LineSelect value="BYLAYER" label="线型" />
        <LineSelect value="ByLayer" label="颜色" swatch />
      </div>
    </Panel>

    <Panel title="实用工具" className="w-[112px]">
      <BigButton label="查询" caret className="w-[46px]"><MeasureIcon /></BigButton>
      <div>
        <IconButton name="ucs" className="w-[22px]" />
        <IconButton name="calculator" className="w-[22px]" />
        <IconButton name="paintLine" className="w-[22px]" />
      </div>
      <div className="ml-1">
        <IconButton name="group" />
        <IconButton name="overlap" />
        <IconButton name="quickSel" />
      </div>
      <div>
        <CaretButton label="组选项" className="h-[22px] w-[10px]" />
        <CaretButton label="次序选项" className="h-[22px] w-[10px]" />
        <CaretButton label="选择选项" className="h-[22px] w-[10px]" />
      </div>
    </Panel>

    <Panel title="剪贴板" className="w-[79px]">
      <BigButton label="粘贴" caret className="w-[46px]"><PasteIcon /></BigButton>
      <div>
        <IconButton name="copyLink" className="w-[22px]" />
        <IconButton name="cut" className="w-[22px]" />
        <IconButton name="copy" className="w-[22px]" />
      </div>
    </Panel>

    <ToolStrip label="给排水绘图" groups={drawTools} className="top-[47px] left-[95px] h-[26px]" />
  </div>
);

const PaneHeader = ({ title, className }) => (
  <div className={clsx("flex h-[19px] shrink-0 items-center bg-[#b8cee9]", className)}>
    <h2 className="flex-1 text-[13px] leading-[18px] whitespace-nowrap text-[#1d4a92]">{title}</h2>
    <button aria-label="固定" className="mr-[9px]">
      <svg viewBox="0 0 8 9" className="h-[9px] w-2" fill="none" shapeRendering="crispEdges">
        <path d="M1.5 5V.5H6.5V5M5.5 1V5M0 5.5H8M4.5 6V9" stroke="#4a70ac" />
      </svg>
    </button>
    <button aria-label="关闭" className="mr-[5px]">
      <svg viewBox="0 0 8 8" className="h-2 w-2" fill="none">
        <path d="M0 0L8 8M8 0L0 8" stroke="#4a70ac" strokeWidth="1.5" />
      </svg>
    </button>
  </div>
);

// half-width characters sit on a 6px cell next to the 12px ideographs
const Mixed = ({ text }) =>
  text.split(/([\x20-\x7e]+)/).map((part, i) =>
    i % 2 ? (
      <span key={i} className="font-['DejaVu_Sans_Mono',monospace] text-[10px] whitespace-pre">{part}</span>
    ) : (
      part
    )
  );

const sections = [
  {
    title: "常规",
    rows: [
      ["颜色", "ByLayer", "swatch"],
      ["图层", "0"],
      ["线型", "BYLAYER", "line"],
      ["线型比例", "1"],
      ["线宽", "ByLayer", "short"],
      ["透明度", "ByLayer"],
      ["厚度", "0"],
    ],
  },
  { title: "三维效果", rows: [["材质", "ByLayer"], ["阴影显示", "投射和接收阴影"]] },
  {
    title: "打印样式",
    rows: [
      ["打印样式", "BYCOLOR", "locked"],
      ["打印样式表", "无"],
      ["打印表附...", "模型", "locked"],
      ["打印表类型", "不可用", "locked"],
    ],
  },
  {
    title: "视图",
    rows: [
      ["圆心 X 坐标", "42585", "locked"],
      ["圆心 Y 坐标", "15784", "locked"],
      ["圆心 Z 坐标", "0", "locked"],
      ["高度", "27513", "locked"],
    ],
  },
];

const Properties = () => (
  <aside className="flex w-[226px] shrink-0 flex-col overflow-hidden bg-[#d5e4f2]">
    <PaneHeader title="特性" className="mr-[2px]" />
    <div className="mt-[5px] ml-[5px] flex h-[23px] w-[210px] shrink-0 items-start">
      <div className="flex h-5 w-[131px] items-center border border-[#adadad] bg-[#e1e1e1]">
        <select aria-label="选择集" className="w-full appearance-none pl-[2px] text-[12px] leading-[18px] text-black">
          <option>无选择</option>
        </select>
        <svg viewBox="0 0 9 5" className="mr-1 h-[5px] w-[9px] shrink-0" fill="none">
          <path d="M0 0L4.5 4.5L9 0" stroke="#444" />
        </svg>
      </div>
      <div className="ml-[10px] flex">
        {["pickAdd", "pickObj", "pickFast"].map((n) => (
          <button key={n} aria-label={n} className="flex h-[23px] w-[23px] items-center justify-center border border-[#b8cee9]">
            <Icon list={ribbonShapes[n]} />
          </button>
        ))}
      </div>
    </div>
    <div className="mt-[5px] ml-[5px] w-[210px]">
      {sections.map((s) => (
        <section key={s.title} className="mb-[3px]">
          <button className="flex h-[21px] w-full items-center bg-[#b8cee9] pr-[7px] pl-1 text-[13px] font-bold text-[#15458f]">
            <span className="flex-1 text-left leading-[20px]">{s.title}</span>
            <svg viewBox="0 0 8 4" className="h-1 w-2" aria-hidden="true">
              <path d="M4 0L8 4H0z" fill={NAVY} />
            </svg>
          </button>
          <table className="ml-5 w-[190px] table-fixed border-collapse text-[12px] text-black">
            <tbody>
              {s.rows.map(([label, value, kind]) => (
                <tr key={label} className="h-[21px]">
                  <th className="w-[75px] border border-t-0 border-[#b8cee9] p-0 pl-[2px] text-left font-normal">
                    <span className="block h-[19px] overflow-hidden leading-[18px] whitespace-nowrap">
                      <Mixed text={label} />
                    </span>
                  </th>
                  <td
                    className={clsx(
                      "border border-t-0 border-[#b8cee9] p-0 pl-[3px] whitespace-nowrap",
                      kind !== "locked" && "bg-white"
                    )}
                  >
                    <span className="flex h-[19px] items-center leading-[19px]">
                      {kind === "swatch" && <span className="mr-[2px] h-3 w-3 border border-black" />}
                      {kind === "line" && <span className="mx-[2px] h-px w-12 bg-black" />}
                      {kind === "short" && <span className="mr-[3px] h-px w-[42px] bg-black" />}
                      <span><Mixed text={value} /></span>
                    </span>
                  </td>
                </tr>
              ))}
            </tbody>
          </table>
        </section>
      ))}
    </div>
  </aside>
);

const menus = [
  "管　　线", "平　　面", "消　　防", "系统绘图", "计　　算", "专业标注", "泵　　房",
  "虹吸雨水", "文字表格", "尺寸标注", "符号标注", "文件布图", "设计资料",
];

const PipeMenu = () => (
  <aside className="ml-1 flex w-[118px] shrink-0 flex-col bg-[#d5e4f2]">
    <PaneHeader title="浩辰给排水" className="pl-[3px]" />
    <nav className="mx-px mt-[2px] flex-1 bg-white px-[3px] pt-px">
      <ul className="border border-[#bcbcbc]">
        {menus.map((m, i) => (
          <li key={m} className={clsx(i > 0 && "border-t border-[#bcbcbc]")}>
            <button className="flex h-[18px] w-full items-center bg-linear-to-r from-[#d6e4f8] to-[#e2eeff] pr-[6px] pl-[18px] text-[12px] leading-[18px] text-black">
              <span className="flex-1 text-left whitespace-pre">{m}</span>
              <Caret className="text-[#555]" />
            </button>
          </li>
        ))}
      </ul>
    </nav>
  </aside>
);

const Watermark = () => (
  <svg viewBox="0 0 216 84" className="absolute top-[109px] left-[248px] h-[84px] w-[216px]">
    <path d="M17 18Q22 4 35 4Q48 4 53 18" fill="none" stroke="#94989c" strokeWidth="6" />
    <path d="M17 18Q22 4 35 4Q48 4 53 18" fill="none" stroke="#6c7073" strokeWidth="4" />
    <rect x=".5" y="15.5" width="70" height="66" rx="12" fill="#6c7073" stroke="#94989c" />
    <path d="M20 34Q29 34 35 30Q42 34 51 34V48Q50 60 35 67Q21 60 20 48z" fill="#7f8386" />
    <text x="26" y="56" fontSize="18" fontWeight="900" fill="#64686b" fontFamily="Noto Sans CJK SC, sans-serif">安</text>
    <text
      x="75"
      y="54"
      fontFamily="Noto Sans CJK SC, sans-serif"
      fontSize="46"
      fontWeight="900"
      strokeLinejoin="round"
      fill="#212830"
      stroke="#7d8184"
      strokeWidth="4"
      paintOrder="stroke"
    >
      安下载
    </text>
    <text x="78" y="80" fontFamily="Open Sans, sans-serif" fontSize="30" fontWeight="600" fill="#6c7073" stroke="#8c9093" strokeWidth=".6">
      anxz.com
    </text>
  </svg>
);

const DrawingArea = () => (
  <main className="ml-[5px] flex min-w-0 flex-1 flex-col">
    <div className="flex h-[19px] shrink-0 items-end bg-[#f0f0f0]">
      <div className="relative flex h-[19px] w-[103px] items-center pl-6">
        <svg viewBox="0 0 103 19" className="absolute inset-0 h-full w-full" aria-hidden="true">
          <defs>
            <linearGradient id="tab" x1="0" y1="0" x2="0" y2="1">
              <stop offset="0" stopColor="#fff0d0" />
              <stop offset="1" stopColor="#ffc95c" />
            </linearGradient>
          </defs>
          <path d="M1 19L17 3Q20 .5 24 .5H100Q102.5 .5 102.5 3V19" fill="url(#tab)" stroke="#8a8a8a" />
        </svg>
        <span className="relative font-['Liberation_Mono',monospace] text-[10px] text-black">Drawing1</span>
        <button aria-label="关闭图纸" className="relative ml-[14px]">
          <svg viewBox="0 0 7 7" className="h-[7px] w-[7px]">
            <path d="M0 0L7 7M7 0L0 7" stroke="#c4bfb4" strokeWidth="2" />
          </svg>
        </button>
      </div>
    </div>
    <div className="relative flex-1 overflow-hidden border-t-2 border-l-2 border-[#858585] bg-[#212830]">
      <svg viewBox="0 0 85 96" className="absolute top-[86px] left-0 h-[96px] w-[85px]" fill="none" shapeRendering="crispEdges">
        <path d="M37.5 0V96M0 47.5H85M34.5 44.5H40.5V50.5H34.5z" stroke="#fff" />
      </svg>
      <ToolStrip label="给排水管线" groups={pipeTools} className="top-[2px] left-[19px] h-6" />
      <ToolStrip label="图层工具" groups={layerTools} className="top-[39px] left-[38px] h-6" />
      <div className="pointer-events-none absolute top-1 left-[21px] h-[91px] w-[825px] border-3 border-[#f00]" />
      <Watermark />
      <svg viewBox="0 0 115 115" className="absolute top-[55px] left-[145px] h-[115px] w-[115px] drop-shadow-[2px_2px_2px_rgba(0,0,0,0.6)]">
        <path d="M15 15L103 102" stroke="#f00" strokeWidth="3" />
        <path d="M103 102L107 106" stroke="#e05050" strokeWidth="3" />
        <path d="M3 3L25 12L19 18L14 26z" fill="#f00" />
      </svg>
    </div>
  </main>
);

const App = () => (
  <div className="relative flex h-screen flex-col overflow-hidden bg-[#bfdbff] font-['Noto_Sans_CJK_SC',sans-serif]">
    <Logo />
    <TitleBar />
    <nav className="flex h-[23px] shrink-0 items-end bg-[#bfdbff] pl-[43px] text-[13px] leading-[20px] text-[#15428b]">
      <button className="mr-[2px] h-[22px] shrink-0 rounded-t-[3px] border border-b-0 border-[#8fb5e6] bg-linear-to-b from-[#f4f9ff] to-[#dfeaf7] px-[11px]">
        常用
      </button>
      {tabs.map((t) => (
        <button key={t} className="h-[22px] shrink-0 px-[14px]">
          {t}
        </button>
      ))}
    </nav>
    <Ribbon />
    <div className="flex min-h-0 flex-1 pt-px">
      <Properties />
      <PipeMenu />
      <DrawingArea />
    </div>
  </div>
);

export default App;
